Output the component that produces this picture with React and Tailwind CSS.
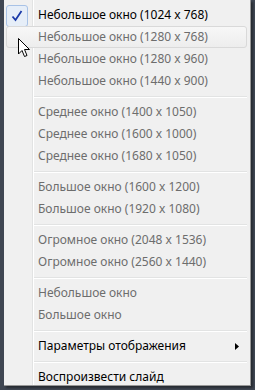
import React from "react";

const Sep = () => (
  <div className="flex h-[9px] items-center pl-[29px] pr-[3px]">
    <div className="flex-1 border-t border-[#e2e3e3] border-b border-b-white" />
  </div>
);

const Item = ({ text, dim, hover, checked, arrow }) => (
  <div
    className={`relative flex h-[22px] items-center pl-[34px] pr-[3px] ${
      dim ? "text-[#6d6d6d]" : "text-black"
    }`}
  >
    {hover && (
      <div className="absolute left-[2px] right-[3px] top-0 bottom-0 rounded-[3px] border border-[#d9d9d9] bg-gradient-to-b from-[#f7f7f7] to-[#ededed]" />
    )}
    {checked && (
      <div className="absolute left-[2px] top-[1px] flex h-[22px] w-[22px] items-center justify-center rounded-[3px] border border-[#a8c2e6] bg-[#e6eef8]">
        <svg width="12" height="12" viewBox="0 0 12 12">
          <path d="M1.5 6.5 L4.5 10 L10.5 1" fill="none" stroke="#1b3aa8" strokeWidth="1.8" />
        </svg>
      </div>
    )}
    <span className="relative">{text}</span>
    {arrow && (
      <svg className="absolute right-[11px]" width="4" height="7" viewBox="0 0 4 7">
        <path d="M0 0 L4 3.5 L0 7 Z" fill="#000" />
      </svg>
    )}
  </div>
);

export default function App() {
  return (
    <div
      className="relative h-[390px] w-[255px] overflow-hidden bg-[#3f4652] pl-[4px]"
      style={{ fontFamily: '"Noto Sans", "Open Sans", sans-serif' }}
    >
      <div className="relative h-[386px] w-[247px] border-r border-b border-[#979797] bg-[#f0f0f0] pt-[4px] text-[12px] shadow-[2px_2px_2px_rgba(0,0,0,0.4)]">
        <div className="absolute bottom-0 left-[28px] top-0 w-[2px] border-l border-[#e2e3e3] border-r border-r-white" />
        <Item text="Небольшое окно (1024 x 768)" checked />
        <Item text="Небольшое окно (1280 x 768)" dim hover />
        <Item text="Небольшое окно (1280 x 960)" dim />
        <Item text="Небольшое окно (1440 x 900)" dim />
        <Sep />
        <Item text="Среднее окно (1400 x 1050)" dim />
        <Item text="Среднее окно (1600 x 1000)" dim />
        <Item text="Среднее окно (1680 x 1050)" dim />
        <Sep />
        <Item text="Большое окно (1600 x 1200)" dim />
        <Item text="Большое окно (1920 x 1080)" dim />
        <Sep />
        <Item text="Огромное окно (2048 x 1536)" dim />
        <Item text="Огромное окно (2560 x 1440)" dim />
        <Sep />
        <Item text="Небольшое окно" dim />
        <Item text="Большое окно" dim />
        <Sep />
        <Item text="Параметры отображения" arrow />
        <Sep />
        <Item text="Воспроизвести слайд" />
      </div>
      <svg className="absolute left-[18px] top-[38px]" width="13" height="20" viewBox="0 0 13 20">
        <path d="M0.5 0.5 L0.5 16 L4 12.5 L6.5 18.5 L9 17.5 L6.5 11.5 L11.5 11.5 Z" fill="#fff" stroke="#000" strokeWidth="1" />
      </svg>
    </div>
  );
}
